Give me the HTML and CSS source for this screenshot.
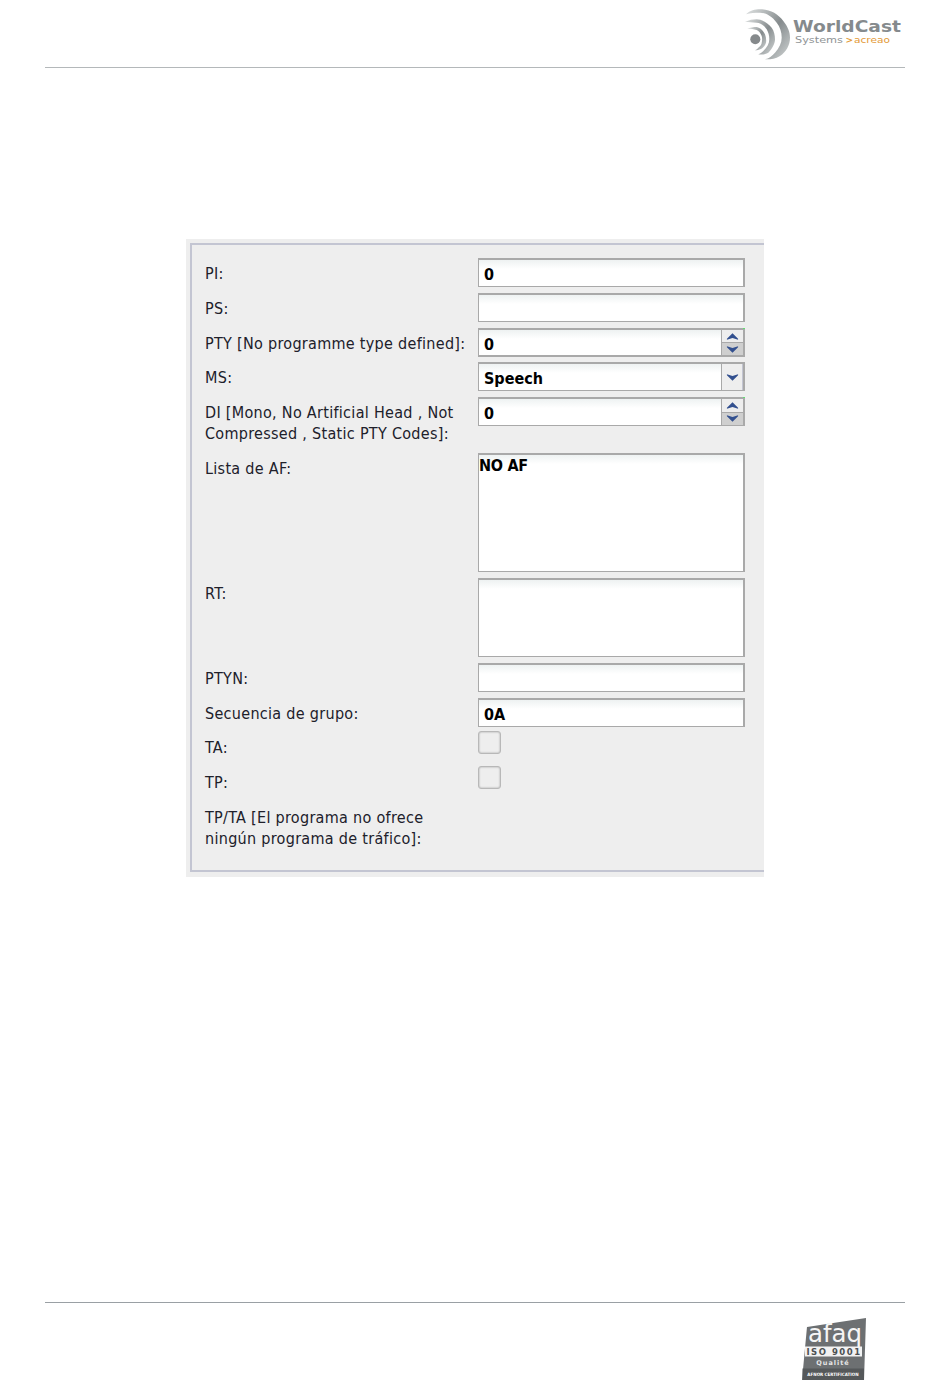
FILE: index.html
```html
<!DOCTYPE html>
<html lang="es">
<head>
<meta charset="utf-8">
<title>RDS</title>
<link rel="stylesheet" href="styles.css">
</head>
<body>
<div class="page">
  <header class="header">
    <svg class="logo" width="160" height="52" viewBox="0 0 160 52">
      <defs>
        <linearGradient id="arc" x1="0" y1="0" x2="1" y2="0.9">
          <stop offset="0" stop-color="#dfe2e2"/>
          <stop offset="0.55" stop-color="#858b8d"/>
          <stop offset="1" stop-color="#c9cdcd"/>
        </linearGradient>
      </defs>
      <path fill="url(#arc)" d="M4 6.3C8 2.5 13 1.3 18 1.3C28 1.3 36 6 41.3 13C46 19 48 24 48 29.7C48 37 44 44 38 48C33 51 28 51.5 23 51.3C27 50.5 30 48 33 44.7C37 40 39.7 35 39.7 29.7C39.7 24 38 19 34.7 14.7C30 8.5 24 4.7 18 4.7C13 4.7 8 5 4 6.3Z"/>
      <path fill="url(#arc)" d="M3 14C7 12 11 11.3 14.7 11.3C20 11.3 26 15 29.7 19.7C32 23 33 27 33 31.3C33 36 30 41 26.3 44.7C23 46.5 20 46.8 16.3 46.3C18 46 20 44.5 21.3 43C25 39.5 27.3 36 27.3 31.3C27.3 27.5 26.5 24.5 24.7 21.3C22 17.5 18.5 14.7 14.7 14.7C10.5 14.5 7 14 3 14Z"/>
      <path fill="url(#arc)" d="M5.3 20.7C8 19.5 11.5 19 14.7 19C18 19.5 21 22.5 23 26.3C24 29 24.5 32 24 34.7C23 38 20.5 40.5 18 41.3C16.5 42 14.5 42.5 13 42.3C14.5 41.7 15.5 41 16.3 39.7C18.5 38 19.7 36.5 19.7 34.7C20.3 32.5 20.3 30 19.7 28C18.5 25 17 23 14.7 22C11.5 21 8 20.6 5.3 20.7Z"/>
      <circle cx="13.3" cy="31.3" r="5" fill="#85898b"/>
      <text class="logo-main" x="51" y="24" textLength="108" lengthAdjust="spacingAndGlyphs">WorldCast</text>
      <text class="logo-sub" x="53" y="35" textLength="48" lengthAdjust="spacingAndGlyphs">Systems</text>
      <text class="logo-arrow" x="103.5" y="35">&gt;</text>
      <text class="logo-brand" x="112" y="35" textLength="36" lengthAdjust="spacingAndGlyphs">acreao</text>
    </svg>
  </header>

  <main class="panel">
    <form class="form">
      <label class="lbl r-std">PI:</label>
      <div class="field"><input class="box" type="text" value="0"></div>

      <label class="lbl r-std">PS:</label>
      <div class="field"><input class="box" type="text" value=""></div>

      <label class="lbl r-std">PTY [No programme type defined]:</label>
      <div class="field compound thick">
        <input class="inner" type="text" value="0">
        <div class="spin">
          <span class="sp up"><svg width="13" height="7" viewBox="0 0 14 7"><path d="M1 7L7 5L13 7V6L7 0L1 6Z"/></svg></span>
          <span class="sp down"><svg width="13" height="7" viewBox="0 0 14 7"><path d="M1 0L7 2L13 0V1L7 7L1 1Z"/></svg></span>
        </div>
      </div>

      <label class="lbl r-std">MS:</label>
      <div class="field compound">
        <input class="inner" type="text" value="Speech">
        <div class="drop"><svg width="13" height="7" viewBox="0 0 14 7"><path d="M1 0L7 2L13 0V1L7 7L1 1Z"/></svg></div>
      </div>

      <label class="lbl r-std">DI [Mono, No Artificial Head , Not<br>Compressed , Static PTY Codes]:</label>
      <div class="field compound">
        <input class="inner" type="text" value="0">
        <div class="spin">
          <span class="sp up"><svg width="13" height="7" viewBox="0 0 14 7"><path d="M1 7L7 5L13 7V6L7 0L1 6Z"/></svg></span>
          <span class="sp down"><svg width="13" height="7" viewBox="0 0 14 7"><path d="M1 0L7 2L13 0V1L7 7L1 1Z"/></svg></span>
        </div>
      </div>

      <label class="lbl lbl-area">Lista de AF:</label>
      <div class="field"><textarea class="box area af">NO AF</textarea></div>

      <label class="lbl lbl-area">RT:</label>
      <div class="field"><textarea class="box area rt"></textarea></div>

      <label class="lbl r-std">PTYN:</label>
      <div class="field"><input class="box" type="text" value=""></div>

      <label class="lbl r-std">Secuencia de grupo:</label>
      <div class="field"><input class="box" type="text" value="0A"></div>

      <label class="lbl lbl-check">TA:</label>
      <div class="field check-cell"><span class="check"></span></div>

      <label class="lbl lbl-check">TP:</label>
      <div class="field check-cell"><span class="check"></span></div>

      <label class="lbl lbl-last">TP/TA [El programa no ofrece<br>ningún programa de tráfico]:</label>
    </form>
  </main>

  <footer class="footer">
    <svg class="afaq" width="64" height="62" viewBox="0 0 64 62">
      <path d="M5 9L64 0L62 62H0Z" fill="#6d7072"/>
      <rect x="0.5" y="50.5" width="61.5" height="11.5" fill="#55585a"/>
      <rect x="3" y="28.5" width="57" height="10" fill="#f2f2f2"/>
      <text class="afaq-main" x="33" y="24" textLength="54" lengthAdjust="spacingAndGlyphs">afaq</text>
      <text class="afaq-iso" x="32" y="37">ISO 9001</text>
      <text class="afaq-q" x="31" y="47">Qualité</text>
      <text class="afaq-c" x="31" y="58">AFNOR CERTIFICATION</text>
    </svg>
  </footer>
</div>
</body>
</html>
```
FILE: styles.css
```css
* { box-sizing: border-box; }
html, body { margin: 0; padding: 0; background: #fff; }
.page { width: 950px; height: 1387px; display: flex; flex-direction: column; overflow: hidden; }

.header { margin: 0 45px; height: 68px; border-bottom: 1px solid #b4b8ba; display: flex; justify-content: flex-end; align-items: flex-start; padding-top: 8px; padding-right: 3px; }

.logo text { font-family: "DejaVu Sans", sans-serif; }
.logo-main { font-size: 16.5px; font-weight: 700; fill: #858a8d; }
.logo-sub { font-size: 8.5px; fill: #8f9496; }
.logo-arrow { font-size: 9px; font-weight: 700; fill: #e39a37; }
.logo-brand { font-size: 8.5px; fill: #e39a37; }

.panel { margin: 171px 0 0 186px; width: 578px; height: 638px; background: #eeeeee; padding: 4px 0 5px 4px; }

.form { height: 100%; border: solid #c3c5d2; border-width: 2px 0 2px 2px; padding: 13px 0 0 13px; display: grid; grid-template-columns: 273px 267px; grid-template-rows: 35px 35px 34px 35px 56px 125px 85px 35px 33px 35px 35px 1fr; align-items: start; color: #20202a; font-family: "DejaVu Sans", sans-serif; font-stretch: condensed; font-size: 16px; letter-spacing: .3px; }

.lbl { line-height: 21px; }
.r-std { padding-top: 5px; }
.lbl-area { padding-top: 5px; }
.lbl-check { padding-top: 6px; }
.lbl-last { padding-top: 6px; grid-column: 1 / 3; }

.field { height: 29px; }
.box { display: block; width: 267px; height: 29px; border: 1px solid #a9a9a9; border-top-width: 2px; border-right-width: 2px; border-bottom-width: 1px; border-radius: 0; padding: 3px 5px 0; margin: 0; background: linear-gradient(#eef2f2, #ffffff 9px); font: 700 16px "DejaVu Sans", sans-serif; font-stretch: condensed; color: #000; outline: none; }
.area { resize: none; padding: 2px 0; line-height: 18px; letter-spacing: -.3px; overflow: hidden; }
.af { height: 119px; }
.rt { height: 79px; }

.compound { display: flex; width: 267px; border: 1px solid #a9a9a9; border-top-width: 2px; border-right-width: 2px; }
.thick { border-bottom-width: 2px; }
.inner { flex: 1; min-width: 0; border: 0; border-right: 1px solid #a9a9a9; padding: 3px 5px 0; margin: 0; background: linear-gradient(#eef2f2, #ffffff 9px); font: 700 16px "DejaVu Sans", sans-serif; font-stretch: condensed; color: #000; outline: none; }

.spin { position: relative; width: 21px; display: flex; flex-direction: column; }
.spin::after { content: ""; position: absolute; top: -2px; right: -2px; width: 2px; height: 1px; background: #5fe06f; }
.sp { flex: 1; display: flex; align-items: center; justify-content: center; }
.up { background: #eeeeee; border-bottom: 1px solid #a9a9a9; }
.down { background: #cfcfcf; }
.sp svg, .drop svg { display: block; fill: #33508f; }
.drop { width: 21px; display: flex; align-items: center; justify-content: center; background: #eeeeee; border-right: 1px solid #c3c5d2; }

.check-cell { height: 23px; }
.check { display: block; width: 23px; height: 23px; border: 1px solid #b8b8b8; border-radius: 3px; background: #eeeeee; box-shadow: inset 0 0 2px #999; }

.footer { margin: 425px 45px 0; height: 85px; border-top: 1px solid #9aa0a4; display: flex; justify-content: flex-end; padding-top: 15px; padding-right: 39px; }
.afaq text { text-anchor: middle; font-family: "DejaVu Sans", sans-serif; }
.afaq-main { font-size: 24px; fill: #f5f5f5; }
.afaq-iso { font-size: 8.5px; font-weight: 700; letter-spacing: 1.5px; fill: #4d5052; }
.afaq-q { font-size: 6.5px; font-weight: 700; letter-spacing: 1px; fill: #e6e6e6; }
.afaq-c { font-size: 4.5px; font-weight: 700; font-stretch: condensed; fill: #fff; }
```
